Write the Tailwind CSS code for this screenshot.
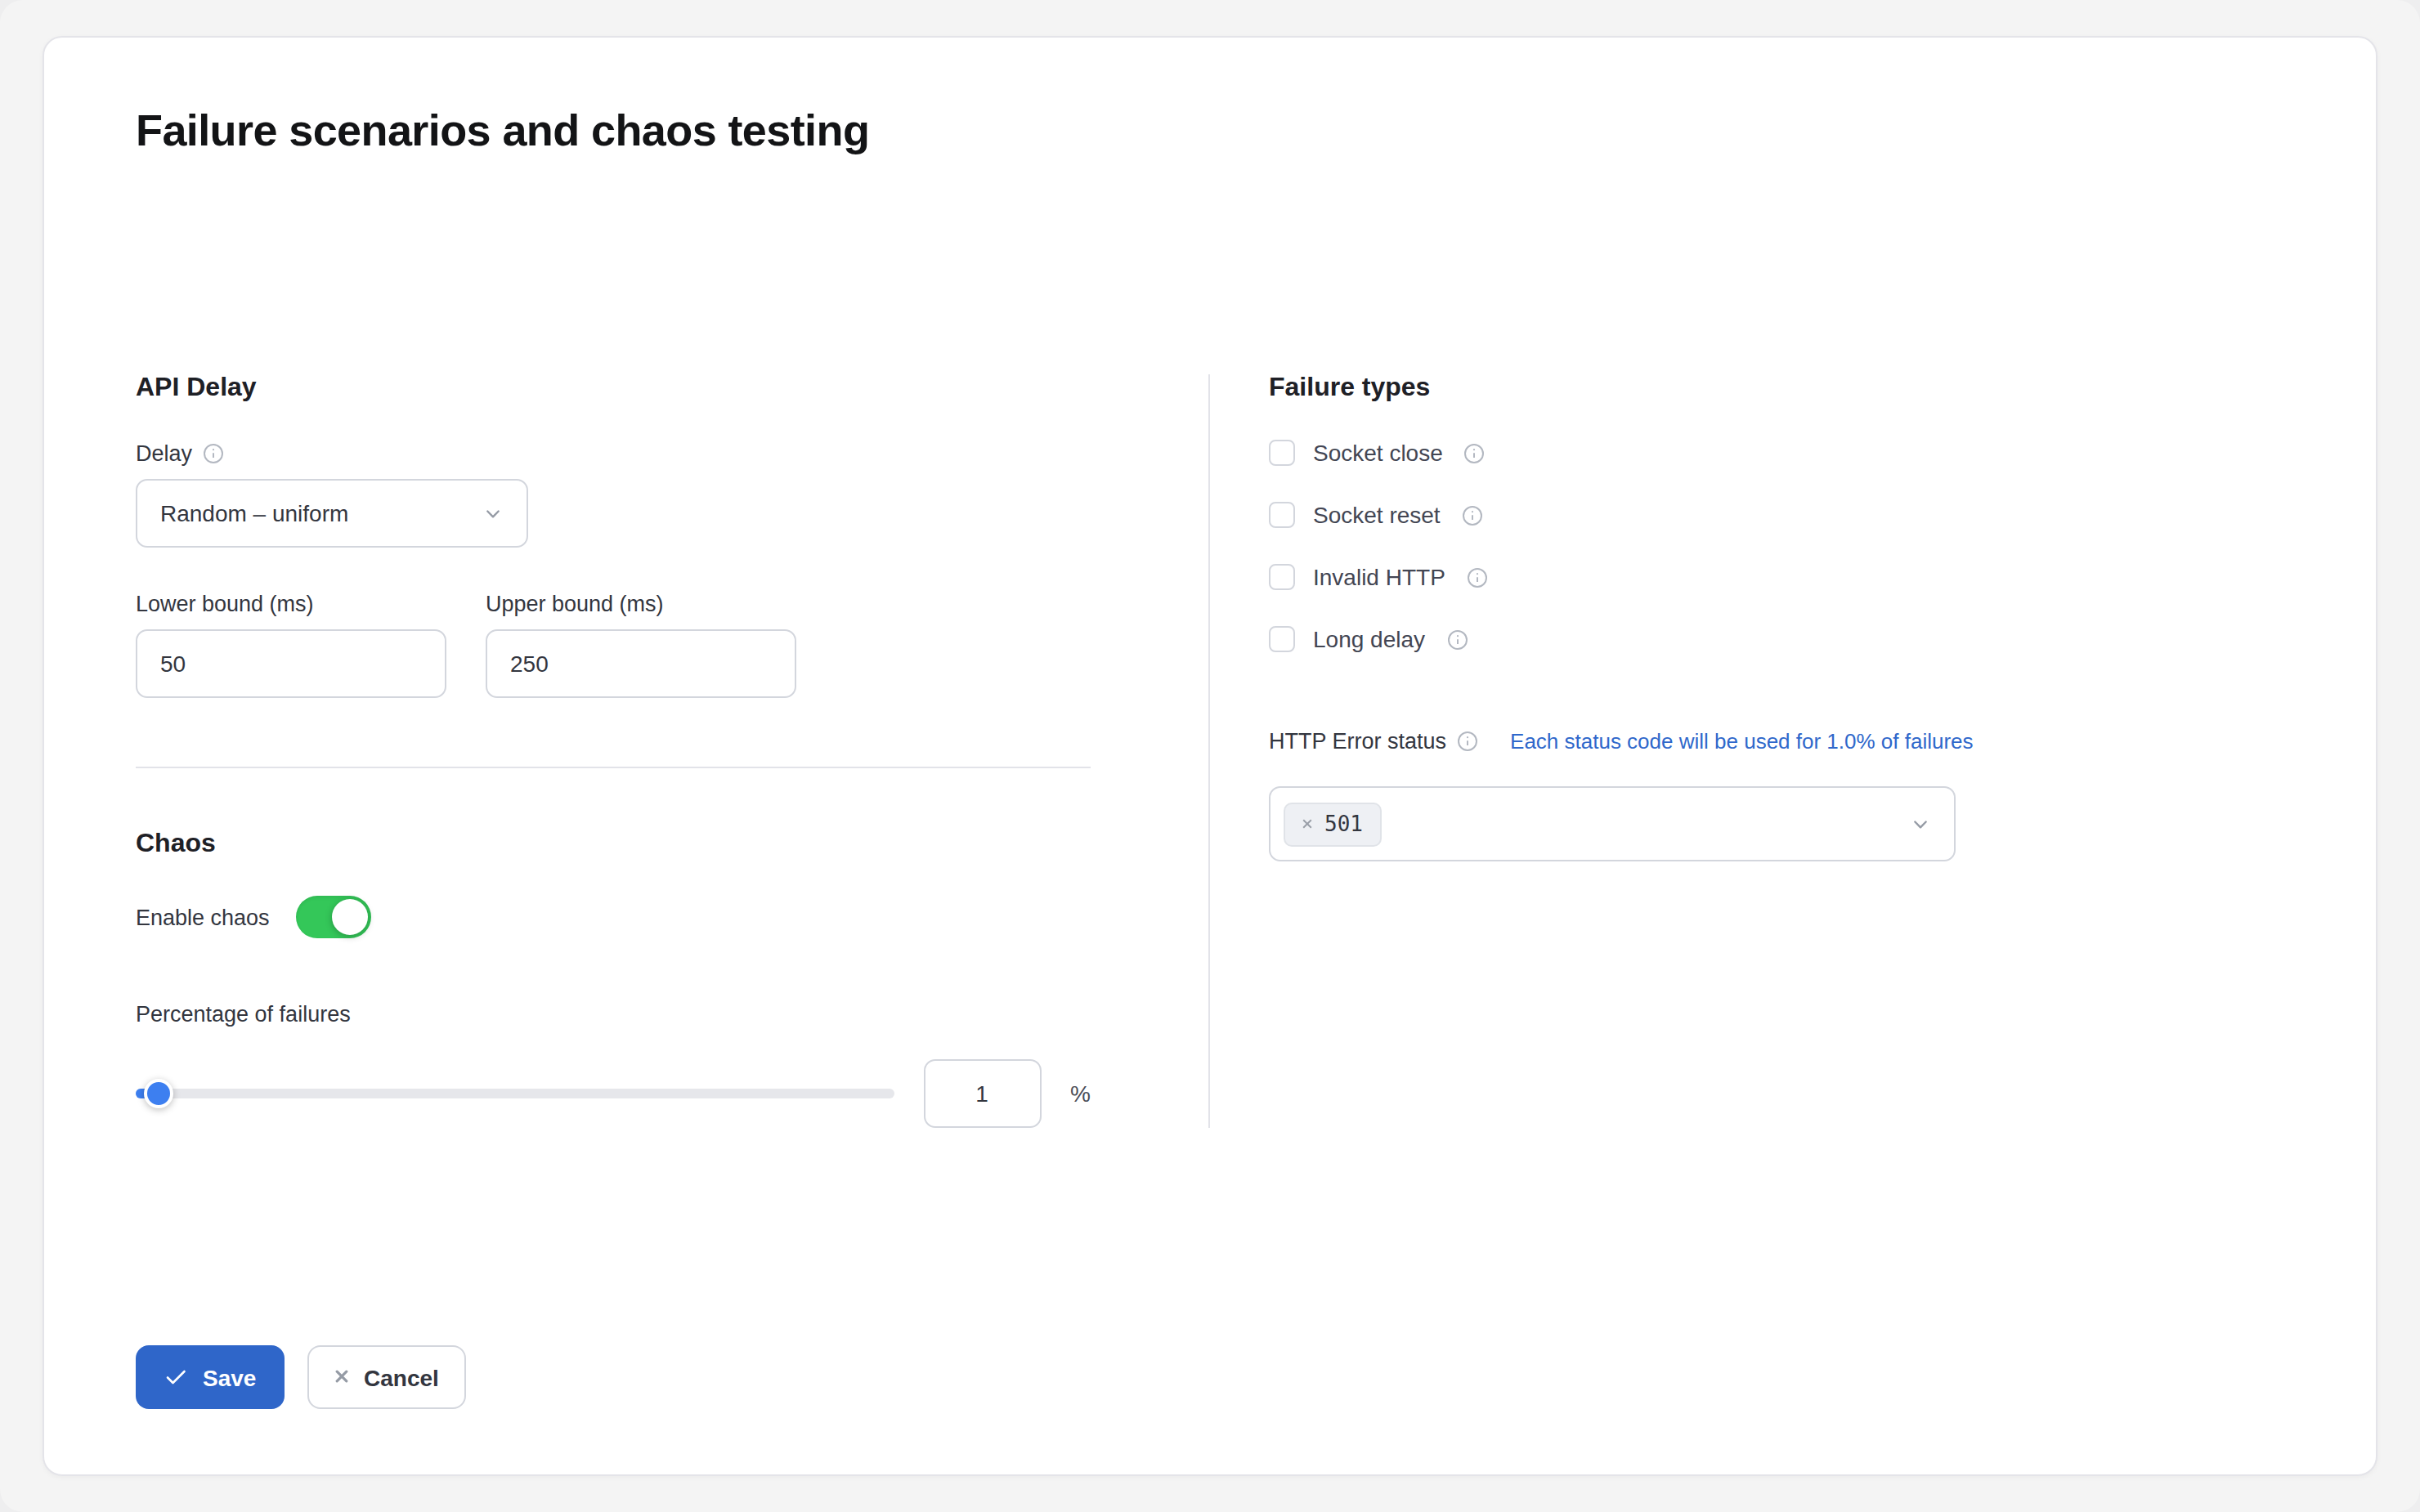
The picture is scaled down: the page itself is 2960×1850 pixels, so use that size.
<!DOCTYPE html>
<html lang="en">
<head>
  <meta charset="UTF-8">
  <title>Failure scenarios and chaos testing</title>
  <script src="https://cdn.jsdelivr.net/npm/@tailwindcss/browser@4"></script>
</head>
<body class="bg-[#eeeeef] font-['Liberation_Sans',Arial,sans-serif] text-[#33363f]">

  <!-- Shared icons -->
  <svg class="hidden">
    <symbol id="icon-info" viewBox="0 0 24 24">
      <circle cx="12" cy="12" r="11" fill="none" stroke="currentColor" stroke-width="2"/>
      <path d="M12 11.2v5.8" fill="none" stroke="currentColor" stroke-width="2"/>
      <circle cx="12" cy="7.2" r="1.1" fill="currentColor"/>
    </symbol>
    <symbol id="icon-chevron" viewBox="0 0 18 12">
      <path d="M2.3 2.5l6.7 6.8 6.7-6.8" fill="none" stroke="currentColor" stroke-width="2.4" stroke-linecap="round" stroke-linejoin="round"/>
    </symbol>
  </svg>

  <div class="h-[1850px] w-[2960px] rounded-[28px] bg-[#f4f4f4] px-[52px] pt-11 pb-11">
    <main class="flex h-[1762px] flex-col rounded-3xl border-2 border-[#e4e4e9] bg-white px-28 pt-[81px] pb-20 shadow-[0_2px_6px_rgba(0,0,0,0.04)]">
      <h1 class="text-[54px] leading-[64px] font-bold tracking-[-0.6px] text-[#131416]">Failure scenarios and chaos testing</h1>

      <div class="mt-[267px] grid grid-cols-2">

        <!-- Delay and chaos settings -->
        <section class="h-[922px] border-r-2 border-[#e2e3e9] pr-36">
          <h2 class="text-[32px] leading-[30px] font-bold text-[#1e2026]">API Delay</h2>

          <div class="mt-[51px] flex h-8 items-center gap-3.5 text-[27px] leading-8">
            <span>Delay</span>
            <svg class="size-6 text-[#b3b8c1]"><use href="#icon-info"/></svg>
          </div>
          <div class="mt-[15px] flex h-[84px] w-[480px] items-center justify-between rounded-[14px] border-2 border-[#d3d6dd] px-7 text-[28px]">
            <span class="pt-0.5">Random – uniform</span>
            <svg class="mt-px mr-1 h-3 w-[18px] text-[#959ba5]"><use href="#icon-chevron"/></svg>
          </div>

          <div class="mt-[53px] flex gap-12">
            <div>
              <label for="lower" class="block text-[27px] leading-8">Lower bound (ms)</label>
              <input id="lower" type="text" value="50" class="mt-[15px] block h-[84px] w-[380px] rounded-[14px] border-2 border-[#d3d6dd] px-7 pt-0.5 text-[28px]">
            </div>
            <div>
              <label for="upper" class="block text-[27px] leading-8">Upper bound (ms)</label>
              <input id="upper" type="text" value="250" class="mt-[15px] block h-[84px] w-[380px] rounded-[14px] border-2 border-[#d3d6dd] px-7 pt-0.5 text-[28px]">
            </div>
          </div>

          <hr class="mt-[84px] border-t-2 border-[#e2e3e9]">

          <h2 class="mt-[76px] text-[32px] leading-[30px] font-bold text-[#1e2026]">Chaos</h2>
          <div class="mt-[50px] flex h-[52px] items-center gap-8">
            <span class="pt-0.5 text-[27px] leading-8">Enable chaos</span>
            <button type="button" role="switch" aria-checked="true" aria-label="Enable chaos" class="flex h-[52px] w-[92px] items-center justify-end rounded-full bg-[#34c759] p-1 shadow-[inset_0_2px_4px_rgba(0,0,0,0.08)]">
              <span class="size-11 rounded-full bg-white shadow-[0_2px_8px_rgba(0,0,0,0.25)]"></span>
            </button>
          </div>

          <div class="mt-[77px] text-[27px] leading-8">Percentage of failures</div>
          <div class="mt-[39px] flex h-[84px] items-center gap-9">
            <div class="relative h-3 flex-1 rounded-full bg-[#e6e7eb]">
              <div class="h-3 w-7 rounded-full bg-[#3d7ff0]"></div>
              <div class="absolute -top-3 left-2.5 size-9 rounded-full border-4 border-white bg-[#3d7ff0] shadow-[0_2px_8px_rgba(0,0,0,0.25)]"></div>
            </div>
            <input type="text" value="1" aria-label="Percentage" class="h-[84px] w-36 rounded-[14px] border-2 border-[#d3d6dd] pt-0.5 pr-0.5 text-center text-[28px]">
            <span class="-ml-px w-[25px] pt-0.5 text-[28px] text-[#4a4d57]">%</span>
          </div>
        </section>

        <!-- Failure types -->
        <section class="pl-[72px]">
          <h2 class="text-[32px] leading-[30px] font-bold text-[#1e2026]">Failure types</h2>
          <div class="mt-[50px] flex flex-col gap-11 text-[28px] leading-8 text-[#434653]">
            <div class="flex h-8 items-center">
              <span class="size-8 rounded-lg border-2 border-[#d3d6dd]"></span>
              <span class="ml-[22px] pt-0.5">Socket close</span>
              <svg class="mt-0.5 ml-[26px] size-6 text-[#b3b8c1]"><use href="#icon-info"/></svg>
            </div>
            <div class="flex h-8 items-center">
              <span class="size-8 rounded-lg border-2 border-[#d3d6dd]"></span>
              <span class="ml-[22px] pt-0.5">Socket reset</span>
              <svg class="mt-0.5 ml-[27px] size-6 text-[#b3b8c1]"><use href="#icon-info"/></svg>
            </div>
            <div class="flex h-8 items-center">
              <span class="size-8 rounded-lg border-2 border-[#d3d6dd]"></span>
              <span class="ml-[22px] pt-0.5">Invalid HTTP</span>
              <svg class="mt-0.5 ml-[27px] size-6 text-[#b3b8c1]"><use href="#icon-info"/></svg>
            </div>
            <div class="flex h-8 items-center">
              <span class="size-8 rounded-lg border-2 border-[#d3d6dd]"></span>
              <span class="ml-[22px] pt-0.5">Long delay</span>
              <svg class="mt-0.5 ml-7 size-6 text-[#b3b8c1]"><use href="#icon-info"/></svg>
            </div>
          </div>

          <div class="mt-[93px] flex h-8 items-center text-[27px] leading-8">
            <span>HTTP Error status</span>
            <svg class="ml-3.5 size-6 text-[#b3b8c1]"><use href="#icon-info"/></svg>
            <span class="ml-10 text-[26px] text-[#2f68cb]">Each status code will be used for 1.0% of failures</span>
          </div>
          <div class="mt-[39px] flex h-[92px] w-[840px] items-center justify-between rounded-[14px] border-2 border-[#d3d6dd] pr-8 pl-4">
            <span class="mt-0.5 flex h-[54px] w-[120px] items-center rounded-[10px] border-2 border-[#e0e3e8] bg-[#eef0f4] pb-0.5 pl-[21px]">
              <svg class="size-3 text-[#9a9fa8]" viewBox="0 0 12 12"><path d="M1.2 1.2l9.6 9.6M10.8 1.2l-9.6 9.6" fill="none" stroke="currentColor" stroke-width="2"/></svg>
              <span class="ml-[15px] font-['DejaVu_Sans_Mono',monospace] text-[26px] leading-8">501</span>
            </span>
            <svg class="mt-0.5 h-3 w-[18px] text-[#959ba5]"><use href="#icon-chevron"/></svg>
          </div>
        </section>
      </div>

      <div class="mt-[266px] flex gap-7 text-[28px] font-bold">
        <button type="button" class="flex h-[78px] w-[182px] items-center rounded-2xl bg-[#2f66c9] pl-9 text-white">
          <svg class="-mt-px h-[22px] w-[26px]" viewBox="0 0 26 22"><path d="M3 11.5l6.5 6.5L23.5 4" fill="none" stroke="currentColor" stroke-width="2.6" stroke-linecap="round" stroke-linejoin="round"/></svg>
          <span class="ml-5 pt-[3px]">Save</span>
        </button>
        <button type="button" class="flex h-[78px] w-[194px] items-center rounded-2xl border-2 border-[#d3d6dd] pl-8">
          <svg class="-mt-0.5 size-4" viewBox="0 0 16 16"><path d="M2.2 2.2l11.6 11.6M13.8 2.2L2.2 13.8" fill="none" stroke="#959ba5" stroke-width="3.2" stroke-linecap="round"/></svg>
          <span class="ml-[19px] pt-[3px]">Cancel</span>
        </button>
      </div>
    </main>
  </div>
</body>
</html>
